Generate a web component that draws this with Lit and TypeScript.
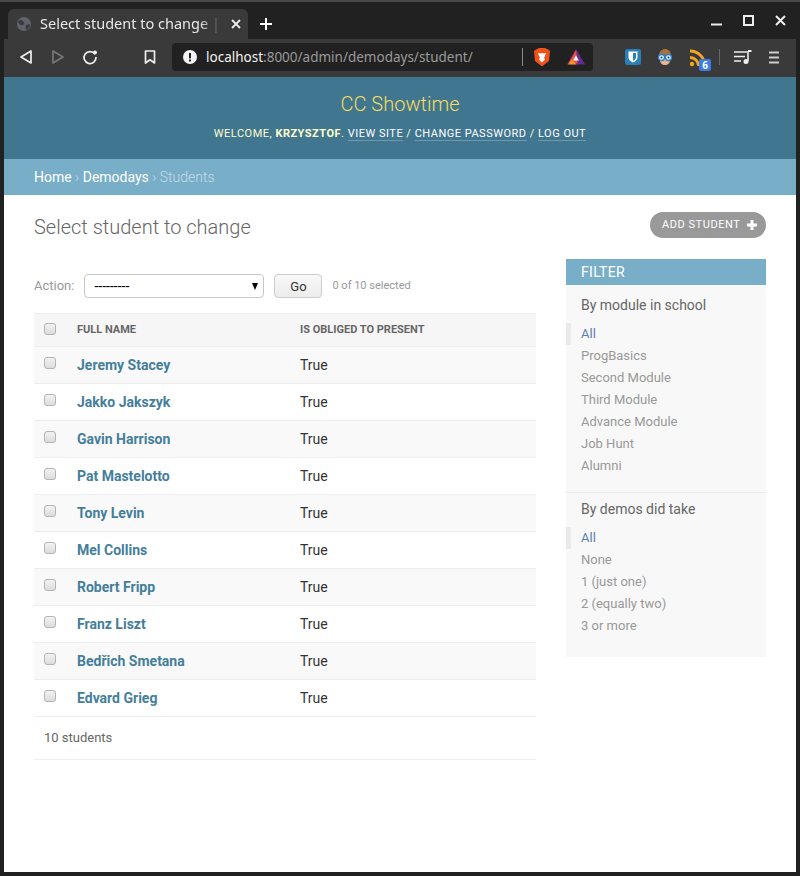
import { LitElement, css, html, svg } from "lit";
import { customElement } from "lit/decorators.js";

const students = [
  "Jeremy Stacey",
  "Jakko Jakszyk",
  "Gavin Harrison",
  "Pat Mastelotto",
  "Tony Levin",
  "Mel Collins",
  "Robert Fripp",
  "Franz Liszt",
  "Bedřich Smetana",
  "Edvard Grieg",
];

const filters = [
  {
    title: "By module in school",
    items: ["All", "ProgBasics", "Second Module", "Third Module", "Advance Module", "Job Hunt", "Alumni"],
  },
  {
    title: "By demos did take",
    items: ["All", "None", "1 (just one)", "2 (equally two)", "3 or more"],
  },
];

const icon = (w: number, h: number, body: unknown) =>
  html`<svg width=${w} height=${h} viewBox="0 0 ${w} ${h}">${body}</svg>`;

@customElement("browser-chrome")
export class BrowserChrome extends LitElement {
  static styles = css`
    :host {
      display: block;
      font-family: "Noto Sans", "DejaVu Sans", sans-serif;
    }
    .tabs {
      height: 39px;
      background: #212121;
      border-top: 2px solid #4a4a4a;
      box-sizing: border-box;
      display: flex;
      align-items: flex-end;
      padding-left: 8px;
    }
    .tab {
      width: 240px;
      height: 30px;
      box-sizing: border-box;
      background: #3a3a3a;
      border-radius: 6px 6px 0 0;
      display: flex;
      align-items: center;
      padding: 0 8px;
      color: #e8e8e8;
      font-size: 14.5px;
      white-space: nowrap;
      overflow: hidden;
    }
    .tab svg { flex: none; }
    .tab .title {
      flex: none;
      width: 181px;
      margin: 0 0 2px 8px;
      overflow: hidden;
      -webkit-mask-image: linear-gradient(90deg, #000 160px, transparent 181px);
      mask-image: linear-gradient(90deg, #000 160px, transparent 181px);
    }
    .tab .close { flex: none; margin-left: 9px; display: flex; }
    .new-tab { margin: 0 0 3px 6px; height: 24px; }
    .win {
      margin-left: auto;
      display: flex;
      align-items: center;
      height: 30px;
      gap: 21px;
      padding: 0 14px 4px 0;
    }
    .toolbar {
      height: 38px;
      margin: 0 4px;
      box-sizing: border-box;
      background: #3a3a3a;
      display: flex;
      align-items: center;
      padding: 0 0 2px 13px;
    }
    .toolbar svg { flex: none; }
    .gap-nav { width: 14px; }
    .gap-mark { width: 42px; }
    .omni {
      width: 421px;
      height: 28px;
      margin-left: 13px;
      background: #212121;
      border-radius: 4px;
      display: flex;
      align-items: center;
      padding-left: 11px;
      box-sizing: border-box;
      font-size: 13.5px;
      color: #9a9a9a;
    }
    .omni b { font-weight: 400; color: #f2f2f2; }
    .omni .url { margin-left: 9px; width: 316px; white-space: nowrap; }
    .sep { width: 1px; height: 18px; background: #8a8a8a; flex: none; }
    .omni .lion { margin-left: 10px; display: flex; }
    .omni .bat { margin-left: 16px; display: flex; }
    .ext { margin-left: 31px; display: flex; align-items: center; }
    .ext .rss { display: flex; }
    .ext .sep { background: #666; height: 16px; margin: 0 14px 0 5px; }
    .gap-14 { width: 14px; }
    .gap-13 { width: 13px; }
  `;

  render() {
    return html`
      <div class="tabs">
        <div class="tab">
          ${icon(16, 16, svg`<circle cx="8" cy="8" r="7" fill="#60646a"/><path d="M4 3.500l3 1.500 1.500 2.500-2 2-2-.5L2 6zM10 9l3.500-1 .5 2.500-3 3.500-1.500-1.500z" fill="#3a3a3a"/>`)}
          <span class="title">Select student to change | CC Showtime</span>
          <span class="close">${icon(12, 12, svg`<path d="M2 2l8 8M10 2l-8 8" stroke="#eee" stroke-width="1.800"/>`)}</span>
        </div>
        <span class="new-tab">${icon(24, 24, svg`<path d="M12 6v12M6 12h12" stroke="#fff" stroke-width="2"/>`)}</span>
        <div class="win">
          ${icon(11, 11, svg`<path d="M0 9.500h11" stroke="#eee" stroke-width="2"/>`)}
          ${icon(11, 11, svg`<rect x="1" y="1" width="9" height="9" fill="none" stroke="#eee" stroke-width="2"/>`)}
          ${icon(11, 11, svg`<path d="M1 1l9 9M10 1l-9 9" stroke="#eee" stroke-width="2"/>`)}
        </div>
      </div>
      <div class="toolbar">
        ${icon(18, 18, svg`<path d="M14 3v12L4 9z" fill="none" stroke="#eee" stroke-width="1.700" stroke-linejoin="round"/>`)}
        <span class="gap-nav"></span>
        ${icon(18, 18, svg`<path d="M4 3v12l10-6z" fill="none" stroke="#777" stroke-width="1.700" stroke-linejoin="round"/>`)}
        <span class="gap-nav"></span>
        ${icon(18, 18, svg`<path d="M14 6.200A6 6 0 1 0 15 9" fill="none" stroke="#eee" stroke-width="1.700"/><circle cx="14" cy="4.500" r="2" fill="#eee"/>`)}
        <span class="gap-mark"></span>
        ${icon(18, 18, svg`<path d="M4.500 3h9v12l-4.500-3.200L4.500 15z" fill="none" stroke="#eee" stroke-width="1.700" stroke-linejoin="round"/>`)}
        <div class="omni">
          ${icon(14, 14, svg`<circle cx="7" cy="7" r="7" fill="#f4f4f4"/><rect x="6" y="3" width="2" height="5.400" fill="#212121"/><rect x="6" y="9.500" width="2" height="2" fill="#212121"/>`)}
          <span class="url"><b>localhost</b>:8000/admin/demodays/student/</span>
          <span class="sep"></span>
          <span class="lion">${icon(18, 20, svg`<path d="M3 2.500L6 1h6l3 1.500 2 1.500-1 10-6.500 5h-1L2 14 1 4z" fill="#f1511b"/><path d="M5 6l2.500.5L9 6l1.500.5L13 6l-1 3-1 1.500 1 2-3 3-3-3 1-2L6 9z" fill="#fff"/>`)}</span>
          <span class="bat">${icon(18, 16, svg`<path d="M9 0l9 15.500H0z" fill="#662d91"/><path d="M9 1L1.500 14.500h9z" fill="#f0503c"/><path d="M1 15.500l3.500-5 5 5z" fill="#f7931e"/><path d="M9 6.500l3 5H6z" fill="#fff"/>`)}</span>
        </div>
        <div class="ext">
          ${icon(18, 18, svg`<rect width="16" height="16" x="1" y="1" rx="2.500" fill="#2a7fb8"/><path d="M4.500 3.500h9v6c0 2.500-2.500 4-4.500 5-2-1-4.500-2.500-4.500-5z" fill="#fff"/><path d="M9 5h3v4.500c0 1.500-1.500 2.500-3 3.300z" fill="#2a7fb8"/>`)}
          <span class="gap-14"></span>
          ${icon(18, 18, svg`<path d="M3 8c0-5 3-7 6-7s6 2 6 7z" fill="#a8713a"/><path d="M4 8h10v4c0 3-2 5-5 5s-5-2-5-5z" fill="#eab48a"/><circle cx="5.500" cy="9.500" r="3" fill="#dff" stroke="#2f7dd1" stroke-width="1.300"/><circle cx="12.500" cy="9.500" r="3" fill="#dff" stroke="#2f7dd1" stroke-width="1.300"/><circle cx="5.500" cy="9.500" r="1" fill="#333"/><circle cx="12.500" cy="9.500" r="1" fill="#333"/>`)}
          <span class="gap-14"></span>
          <span class="rss">${icon(26, 28, svg`<circle cx="4" cy="21" r="2.200" fill="#f5a623"/><path d="M2 14.500a8.500 8.500 0 0 1 8.500 8.500M2 8a15 15 0 0 1 15 15" fill="none" stroke="#f5a623" stroke-width="2.800"/><rect x="11" y="16" width="12" height="12" rx="2" fill="#3b7de8"/><text x="17" y="26" font-size="10" font-family="Noto Sans" font-weight="700" fill="#fff" text-anchor="middle">6</text>`)}</span>
          <span class="sep"></span>
          ${icon(18, 16, svg`<path d="M0 3h13M0 7.500h11M0 12h7" stroke="#eee" stroke-width="1.500"/><path d="M14 2v10" stroke="#eee" stroke-width="1.600"/><path d="M14 2h3.500" stroke="#eee" stroke-width="2"/><circle cx="12" cy="12.500" r="2.500" fill="#eee"/>`)}
          <span class="gap-13"></span>
          ${icon(18, 16, svg`<path d="M4 3.500h10M4 8.500h10M4 13.500h10" stroke="#ccc" stroke-width="2"/>`)}
        </div>
      </div>
    `;
  }
}

@customElement("app-root")
export class AppRoot extends LitElement {
  static styles = css`
    :host {
      display: block;
      width: 800px;
      height: 876px;
      background: #212121;
      overflow: hidden;
      font-family: Roboto, "Liberation Sans", sans-serif;
      font-size: 14px;
      color: #333;
    }
    .page {
      margin: 0 4px;
      height: 795px;
      background: #fff;
      overflow: hidden;
    }
    .header {
      height: 82px;
      box-sizing: border-box;
      background: #417690;
      text-align: center;
      padding-top: 15px;
    }
    .brand {
      color: #f5dd5d;
      font-size: 20px;
      font-weight: 300;
      line-height: 24px;
    }
    .tools {
      margin-top: 9px;
      color: #ffc;
      font-size: 11px;
      letter-spacing: 0.5px;
      line-height: 18px;
      text-transform: uppercase;
      font-weight: 400;
    }
    .tools strong { font-weight: 700; }
    .tools a {
      color: #fff;
      text-decoration: none;
      border-bottom: 1px solid rgba(255, 255, 255, 0.25);
    }
    .crumbs {
      height: 36px;
      box-sizing: border-box;
      background: #79aec8;
      padding: 0 30px;
      color: #c4dce8;
      font-size: 14px;
      font-weight: 300;
      line-height: 36px;
    }
    .crumbs a { color: #fff; font-weight: 400; }
    .content { padding: 20px 30px 0; }
    .head {
      display: flex;
      justify-content: space-between;
      align-items: flex-start;
    }
    h1 {
      margin: 0;
      font-size: 20px;
      font-weight: 300;
      line-height: 24px;
      color: #666;
    }
    .add {
      display: flex;
      align-items: center;
      height: 26px;
      margin: -3px 0 1px;
      box-sizing: border-box;
      padding: 0 0 0 12px;
      width: 116px;
      border-radius: 13px;
      background: #999;
      color: #fff;
      font-size: 11px;
      letter-spacing: 0.55px;
      text-transform: uppercase;
      gap: 6px;
    }
    .add span { margin-bottom: 2px; }
    .columns {
      display: flex;
      justify-content: space-between;
      margin-top: 20px;
    }
    .main { width: 502px; }
    .actions {
      height: 54px;
      display: flex;
      align-items: center;
      color: #999;
      font-size: 13px;
      box-sizing: border-box;
    }
    .action-label { margin-bottom: 1px; }
    .select {
      width: 180px;
      height: 24px;
      box-sizing: border-box;
      margin-left: 10px;
      border: 1px solid #c8c8c8;
      border-radius: 4px;
      background: #fff;
      color: #000;
      display: flex;
      align-items: center;
      justify-content: space-between;
      padding: 0 5px 0 9px;
      font-size: 14px;
    }
    .arrow {
      width: 0;
      height: 0;
      border-left: 3.5px solid transparent;
      border-right: 3.5px solid transparent;
      border-top: 7px solid #000;
    }
    .go {
      margin-left: 10px;
      width: 48px;
      height: 24px;
      box-sizing: border-box;
      border: 1px solid #ccc;
      border-radius: 4px;
      background: linear-gradient(#f8f8f8, #ececec);
      color: #333;
      font-size: 13px;
      text-align: center;
      line-height: 24px;
    }
    .count { margin-left: 10px; font-size: 11px; color: #999; padding-bottom: 2px; }
    .row {
      display: grid;
      grid-template-columns: 43px 223px 1fr;
      align-items: center;
      height: 37px;
      border-bottom: 1px solid #eee;
      box-sizing: border-box;
    }
    .row:nth-child(even) { background: #f9f9f9; }
    .row.top {
      height: 34px;
      background: #f6f6f6;
      border-top: 1px solid #eee;
      font-size: 11px;
      font-weight: 700;
      color: #666;
      text-transform: uppercase;
    }
    .row.top .th { margin-top: -2px; }
    .box {
      width: 12px;
      height: 12px;
      margin: -4px 0 0 10px;
      box-sizing: border-box;
      border: 1px solid #b4b4b4;
      border-radius: 3px;
      background: linear-gradient(#f2f2f2, #dcdcdc);
    }
    .row.top .box { margin-top: -3px; }
    .name { color: #447e9b; font-weight: 700; }
    .paginator {
      height: 43px;
      box-sizing: border-box;
      border-bottom: 1px solid #eee;
      padding-left: 10px;
      color: #666;
      font-size: 13px;
      line-height: 42px;
    }
    .filter {
      width: 200px;
      height: 398px;
      background: #f8f8f8;
    }
    .filter h2 {
      margin: 0;
      height: 26px;
      box-sizing: border-box;
      background: #79aec8;
      color: #fff;
      font-size: 14px;
      font-weight: 400;
      letter-spacing: 0.3px;
      line-height: 26px;
      padding-left: 15px;
      text-transform: uppercase;
    }
    .group { padding: 10px 0 15px; border-bottom: 1px solid #eaeaea; }
    .group:last-child { border-bottom: none; padding-top: 6px; }
    .group h3 {
      margin: 0 0 8px 15px;
      font-size: 14px;
      font-weight: 400;
      line-height: 20px;
      color: #666;
    }
    .group div {
      height: 22px;
      line-height: 22px;
      padding-left: 15px;
      font-size: 13px;
      color: #999;
    }
    .group div.on {
      color: #5b80b2;
      border-left: 5px solid #eaeaea;
      padding-left: 10px;
    }
  `;

  render() {
    return html`
      <browser-chrome></browser-chrome>
      <div class="page">
        <div class="header">
          <div class="brand">CC Showtime</div>
          <div class="tools">
            Welcome, <strong>Krzysztof</strong>. <a>View site</a> / <a>Change password</a> / <a>Log out</a>
          </div>
        </div>
        <div class="crumbs"><a>Home</a> › <a>Demodays</a> › Students</div>
        <div class="content">
          <div class="head">
            <h1>Select student to change</h1>
            <div class="add">
              <span>Add student</span>
              ${icon(12, 12, svg`<path d="M6 1v10M1 6h10" stroke="#fff" stroke-width="3"/>`)}
            </div>
          </div>
          <div class="columns">
            <div class="main">
              <div class="actions">
                <span class="action-label">Action:</span>
                <div class="select">---------<span class="arrow"></span></div>
                <div class="go">Go</div>
                <span class="count">0 of 10 selected</span>
              </div>
              <div class="table">
                <div class="row top">
                  <span class="box"></span><span class="th">Full name</span><span class="th">Is obliged to present</span>
                </div>
                ${students.map(
                  (s) => html`<div class="row"><span class="box"></span><span class="name">${s}</span><span>True</span></div>`
                )}
              </div>
              <div class="paginator">10 students</div>
            </div>
            <div class="filter">
              <h2>Filter</h2>
              ${filters.map(
                (f) => html`<div class="group">
                  <h3>${f.title}</h3>
                  ${f.items.map((it, i) => html`<div class=${i === 0 ? "on" : ""}>${it}</div>`)}
                </div>`
              )}
            </div>
          </div>
        </div>
      </div>
    `;
  }
}
